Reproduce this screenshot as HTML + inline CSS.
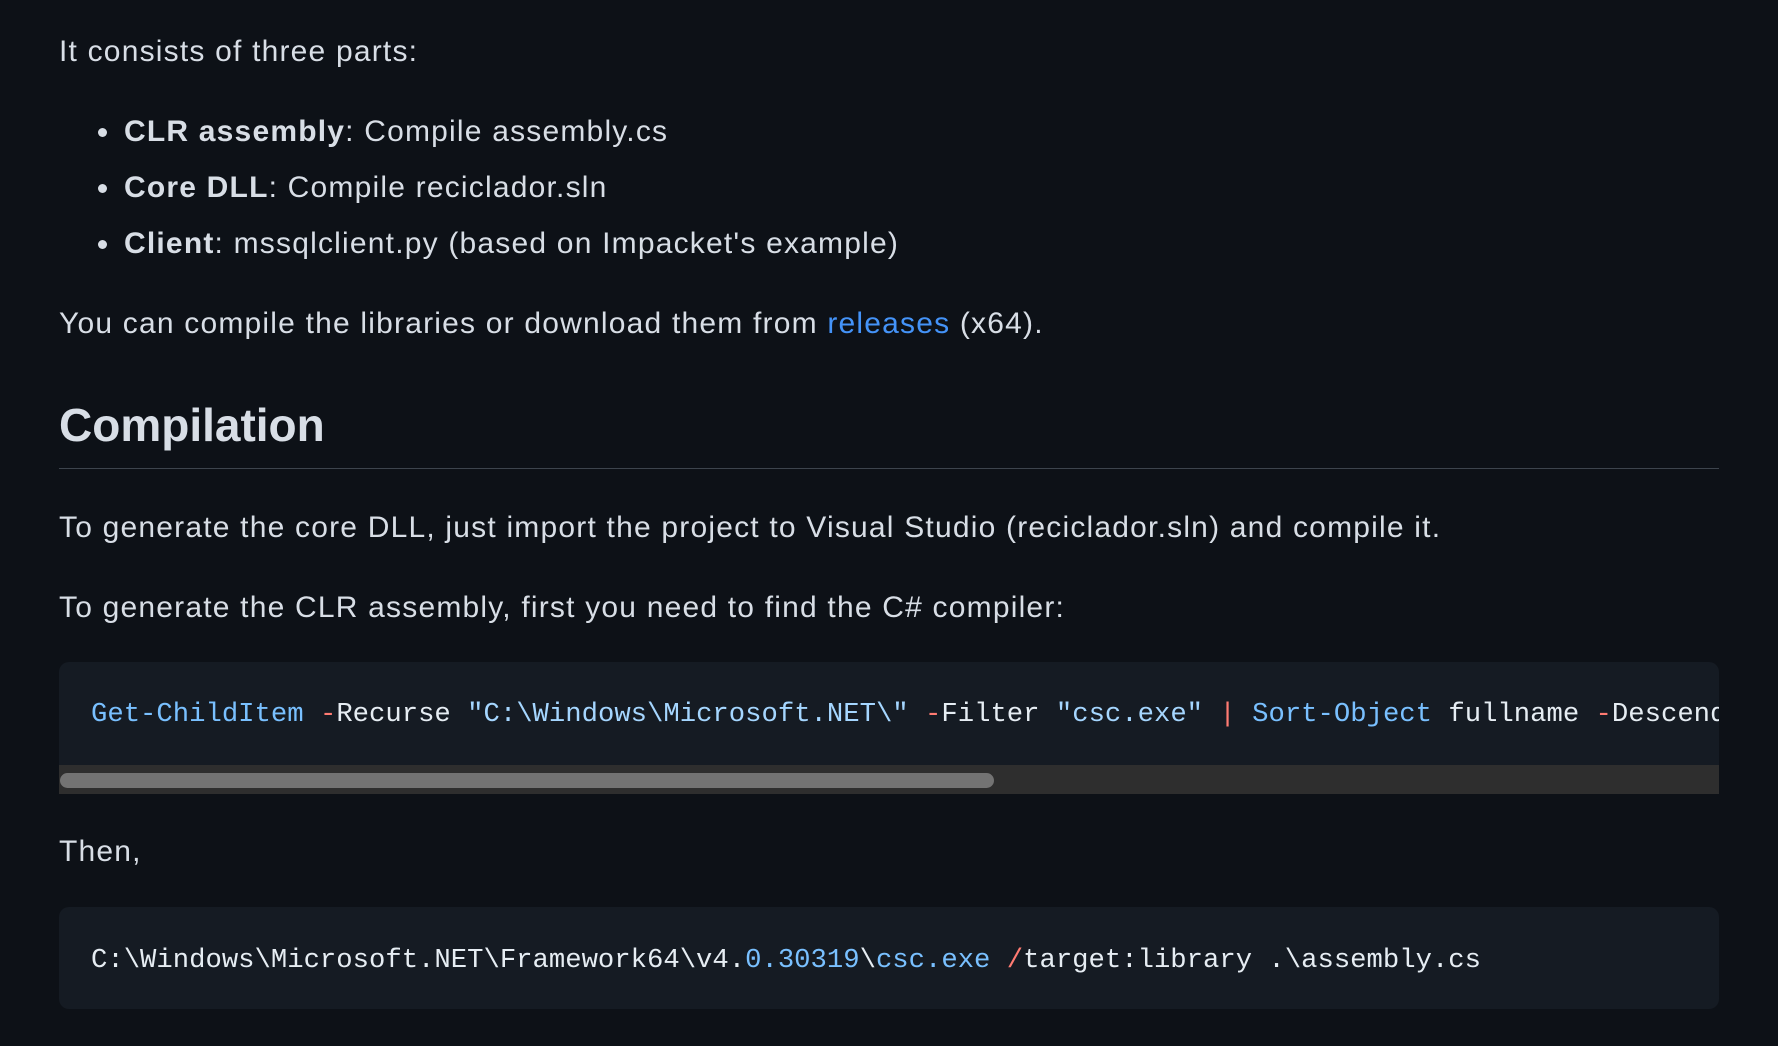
<!DOCTYPE html>
<html><head><meta charset="utf-8"><style>
html,body{margin:0;padding:0;background:#0d1117;width:1778px;height:1046px;overflow:hidden}
body{font-family:"Liberation Sans",sans-serif;color:#d8dee6;font-size:30px;letter-spacing:1.2px;position:relative}
.t{position:absolute;left:59px;white-space:nowrap;line-height:40px}
.b{left:124px}
.dot{position:absolute;left:-26px;top:16px;width:9px;height:9px;border-radius:50%;background:#d8dee6}
a{color:#4493f8;text-decoration:none}
h2{position:absolute;left:59px;top:393px;margin:0;font-size:46px;font-weight:bold;line-height:64px;letter-spacing:0}
.hr{position:absolute;left:59px;width:1660px;top:468px;height:1px;background:#3d444d}
.code{position:absolute;left:59px;width:1660px;background:#151b23;border-radius:10px;overflow:hidden;font-family:"Liberation Mono",monospace;font-size:27.25px;letter-spacing:0;color:#e6edf3;white-space:pre}
.code span.l{position:absolute;left:32px;line-height:40px}
.k{color:#79c0ff}.s{color:#a5d6ff}.r{color:#ff7b72}
</style></head><body>
<div class="t" style="top:32px">It consists of three parts:</div>
<div class="t b" style="top:112px"><i class="dot"></i><b>CLR assembly</b>: Compile assembly.cs</div>
<div class="t b" style="top:168px"><i class="dot"></i><b>Core DLL</b>: Compile reciclador.sln</div>
<div class="t b" style="top:224px"><i class="dot"></i><b>Client</b>: mssqlclient.py (based on Impacket's example)</div>
<div class="t" style="top:304px">You can compile the libraries or download them from <a>releases</a> (x64).</div>
<h2>Compilation</h2>
<div class="hr"></div>
<div class="t" style="top:508px">To generate the core DLL, just import the project to Visual Studio (reciclador.sln) and compile it.</div>
<div class="t" style="top:588px">To generate the CLR assembly, first you need to find the C# compiler:</div>
<div class="code" style="top:662px;height:132px;border-radius:10px 10px 0 0">
<span class="l" style="top:33px"><span class="k">Get-ChildItem</span> <span class="r">-</span>Recurse <span class="s">"C:\Windows\Microsoft.NET\"</span> <span class="r">-</span>Filter <span class="s">"csc.exe"</span> <span class="r">|</span> <span class="k">Sort-Object</span> fullname <span class="r">-</span>Descending</span>
<div style="position:absolute;left:0;right:0;top:103px;height:29px;background:#2e2e2e"></div>
<div style="position:absolute;left:1px;width:934px;top:111px;height:15px;border-radius:8px;background:#737373"></div>
</div>
<div class="t" style="top:832px">Then,</div>
<div class="code" style="top:907px;height:102px">
<span class="l" style="top:34px">C:\Windows\Microsoft.NET\Framework64\v4.<span class="k">0.30319</span>\<span class="k">csc.exe</span> <span class="r">/</span>target:library .\assembly.cs</span>
</div>
</body></html>
